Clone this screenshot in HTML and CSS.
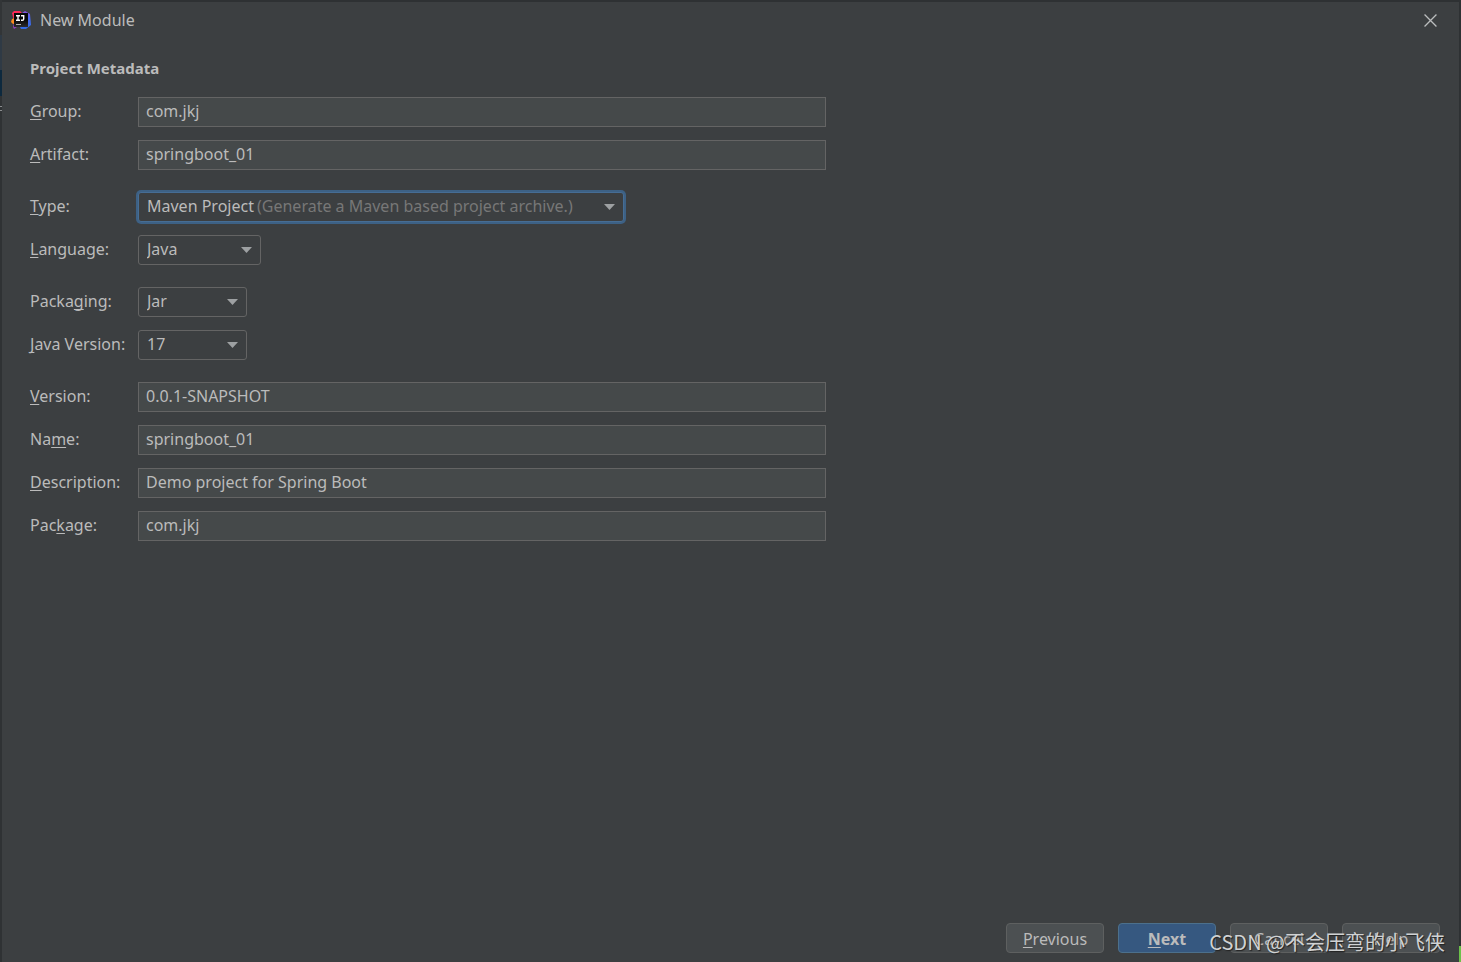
FILE: index.html
```
<!DOCTYPE html>
<html lang="en">
<head>
<meta charset="utf-8">
<title>New Module</title>
<link rel="stylesheet" href="styles.css">
</head>
<body>
<div class="desktop">
<main class="dialog">
  <header class="titlebar">
    <svg class="logo" viewBox="0 0 20 20" aria-hidden="true">
      <defs>
        <linearGradient id="blue" x1="0" y1="0" x2="0" y2="1"><stop offset="0" stop-color="#8a4fd8"/><stop offset=".4" stop-color="#4a6cf0"/><stop offset="1" stop-color="#2f6be6"/></linearGradient>
        <linearGradient id="ink" x1="0" y1="0" x2="0" y2="1"><stop offset=".5" stop-color="#080808"/><stop offset="1" stop-color="#2c2c2e"/></linearGradient>
      </defs>
      <path fill="url(#blue)" d="M11 3 14 1 19 4 20 15 15 19 10 19 8 15z"/>
      <path fill="#fe2857" d="M1 3 3 1 9 1 12 4 12 10 3 11z"/>
      <path fill="#f98a1c" d="M1 9 4 8 4 14 2 14 0 12z"/>
      <path fill="#9340bd" d="M3 13 12 15 6 17 3 19 2 17z"/>
      <path fill="url(#ink)" d="M3 3h14v14H3z"/>
      <path fill="none" stroke="#fff" stroke-width="1.4" d="M5 5.7h4M7 5.7v4.6M5 10.3h4M10 5.7h2.7v3.2q0 1.4-1.4 1.4H10"/>
      <path fill="#b0b0b0" d="M5 14h5v1H5z"/>
    </svg>
    <h1 class="title">New Module</h1>
    <button class="close" type="button" aria-label="Close">
      <svg viewBox="0 0 12 12" aria-hidden="true"><path fill="none" stroke="#bbbdbe" stroke-width="1.2" d="M.5.5l11 11M11.5.5l-11 11"/></svg>
    </button>
  </header>
  <form class="form">
    <h2 class="heading">Project Metadata</h2>
    <div class="group">
      <div class="row"><label class="label" for="group"><u>G</u>roup:</label><input class="field" id="group" type="text" value="com.jkj"></div>
      <div class="row"><label class="label" for="artifact"><u>A</u>rtifact:</label><input class="field" id="artifact" type="text" value="springboot_01"></div>
    </div>
    <div class="group">
      <div class="row"><label class="label" for="type"><u>T</u>ype:</label>
        <div class="combo combo-wide combo-active"><select class="select" id="type" aria-describedby="type-hint"><option>Maven Project</option></select><span class="hint" id="type-hint">(Generate a Maven based project archive.)</span></div></div>
      <div class="row"><label class="label" for="language"><u>L</u>anguage:</label>
        <div class="combo combo-medium"><select class="select" id="language"><option>Java</option></select></div></div>
    </div>
    <div class="group">
      <div class="row"><label class="label" for="packaging">Packa<u>g</u>ing:</label>
        <div class="combo combo-small"><select class="select" id="packaging"><option>Jar</option></select></div></div>
      <div class="row"><label class="label" for="java"><u>J</u>ava Version:</label>
        <div class="combo combo-small"><select class="select" id="java"><option>17</option></select></div></div>
    </div>
    <div class="group">
      <div class="row"><label class="label" for="version"><u>V</u>ersion:</label><input class="field" id="version" type="text" value="0.0.1-SNAPSHOT"></div>
      <div class="row"><label class="label" for="name">Na<u>m</u>e:</label><input class="field" id="name" type="text" value="springboot_01"></div>
      <div class="row"><label class="label" for="description"><u>D</u>escription:</label><input class="field" id="description" type="text" value="Demo project for Spring Boot"></div>
      <div class="row"><label class="label" for="package">Pac<u>k</u>age:</label><input class="field" id="package" type="text" value="com.jkj"></div>
    </div>
  </form>
  <footer class="footer">
    <button class="button" type="button"><u>P</u>revious</button>
    <button class="button button-primary" type="button"><u>N</u>ext</button>
    <button class="button" type="button">Cancel</button>
    <button class="button" type="button">Help</button>
  </footer>
</main>
<p class="watermark">CSDN @不会压弯的小飞侠</p>
</div>
</body>
</html>
```
FILE: styles.css
```
* { box-sizing: border-box; }
body {
  margin: 0;
  background: #2b2d2e;
  color: #bbbbbb;
  font: 16px/20px "Noto Sans", "Open Sans", sans-serif;
}
.desktop {
  position: relative;
  display: flex;
  min-height: 100vh;
  padding: 2px 2px 0;
  background:
    linear-gradient(#6cc04a, #6cc04a) right bottom / 2px 16px no-repeat,
    linear-gradient(#323537 0 35px, #2f3a45 35px 70px, #0d293e 70px 96px, #2f3234 96px 106px, #8a8c8e 106px 107px, #2f3234 107px 110px, #8a8c8e 110px 111px, #2f3234 111px) left top / 2px 100% no-repeat,
    #2e3133;
}
.dialog {
  flex: 1;
  display: flex;
  flex-direction: column;
  background: #3c3f41;
}
.titlebar {
  display: flex;
  align-items: center;
  height: 36px;
  padding: 0 22px 0 9px;
}
.logo { width: 20px; height: 20px; }
.title {
  flex: 1;
  margin: 0 0 0 9px;
  font-size: 16px;
  font-weight: 400;
}
.close {
  display: flex;
  padding: 0;
  border: 0;
  background: none;
}
.close svg { width: 13px; height: 13px; }
.form {
  flex: 1;
  display: flex;
  flex-direction: column;
  gap: 22px;
  padding: 20px 28px;
}
.heading {
  margin: 0 0 -3px;
  font-size: 15px;
  line-height: 20px;
  font-weight: 700;
}
.group {
  display: flex;
  flex-direction: column;
  gap: 13px;
}
.row {
  display: grid;
  grid-template-columns: 108px minmax(0, 688px);
  align-items: center;
}
.label { padding-bottom: 2px; }
u {
  text-decoration-thickness: 1px;
  text-underline-offset: 2px;
  text-decoration-skip-ink: none;
}
.field {
  width: 100%;
  height: 30px;
  padding: 0 7px 2px;
  border: 1px solid #646464;
  border-radius: 0;
  background: #45494a;
  color: inherit;
  font: inherit;
  outline: 0;
}
.combo {
  position: relative;
  display: grid;
  align-items: center;
  max-width: 100%;
}
.combo-wide { width: 486px; }
.combo-medium { width: 123px; }
.combo-small { width: 109px; }
.combo::after {
  content: "";
  position: absolute;
  right: 9px;
  top: 12px;
  width: 11px;
  height: 6px;
  background: #9da0a2;
  clip-path: polygon(0 0, 100% 0, 50% 100%);
  pointer-events: none;
}
.select {
  grid-area: 1 / 1;
  width: 100%;
  height: 30px;
  padding: 0 8px 2px;
  border: 1px solid #646464;
  border-radius: 3px;
  background: #3c3f41;
  color: inherit;
  font: inherit;
  appearance: none;
  outline: 0;
}
.combo-active .select {
  border-color: #466d94;
  box-shadow: 0 0 0 2px #3d6185;
}
.hint {
  grid-area: 1 / 1;
  z-index: 1;
  padding: 0 0 2px 119px;
  color: #777777;
  white-space: nowrap;
  pointer-events: none;
}
.footer {
  display: flex;
  justify-content: flex-end;
  gap: 14px;
  padding: 0 19px 9px;
}
.button {
  width: 98px;
  height: 30px;
  padding: 1px 0 0;
  border: 1px solid #5e6060;
  border-radius: 4px;
  background: #4c5052;
  color: inherit;
  font: inherit;
}
.button-primary {
  border-color: #4c708c;
  background: #365880;
  font-weight: 700;
}
.watermark {
  position: absolute;
  right: 16px;
  bottom: 5px;
  margin: 0;
  color: #d0d2d3;
  font: 20px/30px "Noto Sans CJK SC", sans-serif;
  text-shadow: 1px 1px 1px #222222;
  white-space: nowrap;
  pointer-events: none;
}
```
